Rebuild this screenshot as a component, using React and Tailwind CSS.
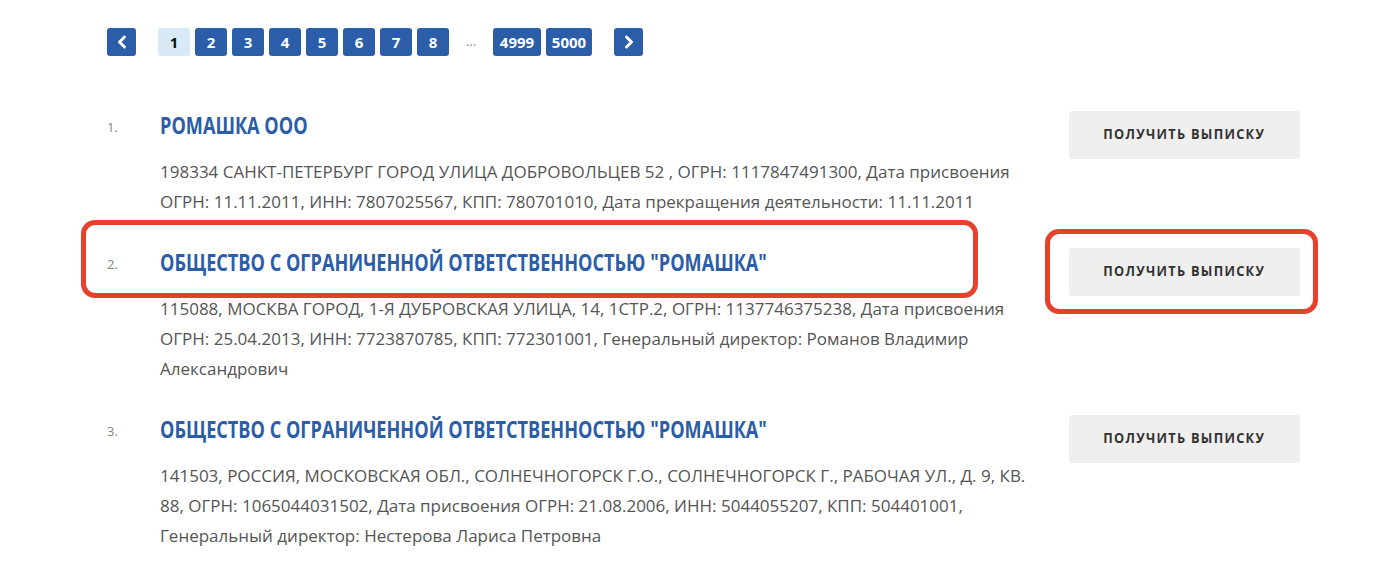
import React from "react";
import { ChevronLeft, ChevronRight } from "lucide-react";

const pages = ["1", "2", "3", "4", "5", "6", "7", "8"];

const items = [
  {
    n: "1.",
    title: "РОМАШКА ООО",
    text: "198334 САНКТ-ПЕТЕРБУРГ ГОРОД УЛИЦА ДОБРОВОЛЬЦЕВ 52 , ОГРН: 1117847491300, Дата присвоения ОГРН: 11.11.2011, ИНН: 7807025567, КПП: 780701010, Дата прекращения деятельности: 11.11.2011",
  },
  {
    n: "2.",
    title: 'ОБЩЕСТВО С ОГРАНИЧЕННОЙ ОТВЕТСТВЕННОСТЬЮ "РОМАШКА"',
    text: "115088, МОСКВА ГОРОД, 1-Я ДУБРОВСКАЯ УЛИЦА, 14, 1СТР.2, ОГРН: 1137746375238, Дата присвоения ОГРН: 25.04.2013, ИНН: 7723870785, КПП: 772301001, Генеральный директор: Романов Владимир Александрович",
  },
  {
    n: "3.",
    title: 'ОБЩЕСТВО С ОГРАНИЧЕННОЙ ОТВЕТСТВЕННОСТЬЮ "РОМАШКА"',
    text: "141503, РОССИЯ, МОСКОВСКАЯ ОБЛ., СОЛНЕЧНОГОРСК Г.О., СОЛНЕЧНОГОРСК Г., РАБОЧАЯ УЛ., Д. 9, КВ. 88, ОГРН: 1065044031502, Дата присвоения ОГРН: 21.08.2006, ИНН: 5044055207, КПП: 504401001, Генеральный директор: Нестерова Лариса Петровна",
  },
];

const PageBtn = ({ children, active, w = "w-8" }) => (
  <span
    className={
      "h-7 flex items-center justify-center rounded-[3px] text-[15px] font-bold " +
      w +
      (active ? " bg-[#d8eaf6] text-[#111]" : " bg-[#2b5da8] text-white")
    }
  >
    {children}
  </span>
);

export default function App() {
  return (
    <div
      className="relative w-[1400px] h-[579px] bg-white overflow-hidden"
      style={{ fontFamily: '"Open Sans", sans-serif' }}
    >
      <div className="pl-[107px] pt-[28px]">
        <div className="flex items-center h-7">
          <span className="w-[29px] h-7 flex items-center justify-center rounded-[3px] bg-[#2b5da8] text-white">
            <ChevronLeft size={20} strokeWidth={3.6} />
          </span>
          <div className="flex gap-[5px] ml-[22px]">
            {pages.map((p) => (
              <PageBtn key={p} active={p === "1"}>
                {p}
              </PageBtn>
            ))}
          </div>
          <span className="w-[44px] text-center text-[13px] text-[#888]">...</span>
          <div className="flex gap-[5px]">
            <PageBtn w="w-[48px]">4999</PageBtn>
            <PageBtn w="w-[46px]">5000</PageBtn>
          </div>
          <span className="ml-[22px] w-[29px] h-7 flex items-center justify-center rounded-[3px] bg-[#2b5da8] text-white">
            <ChevronRight size={20} strokeWidth={3.6} />
          </span>
        </div>

        <div className="mt-[55px] flex flex-col gap-[31px]">
          {items.map((it) => (
            <div key={it.n} className="flex">
              <div className="w-[53px] text-[13px] text-[#888] leading-[30px] pt-[1px]">{it.n}</div>
              <div className="w-[872px]">
                <div className="h-[30px] leading-[28px] whitespace-nowrap">
                  <span className="inline-block origin-left scale-x-[0.755] text-[24px] font-bold text-[#2b5da8]">
                    {it.title}
                  </span>
                </div>
                <p className="mt-[16px] text-[17px] leading-[30px] text-[#555]">{it.text}</p>
              </div>
              <div className="ml-[37px]">
                <button className="w-[231px] h-12 pb-[4px] rounded-[3px] bg-[#efefef] flex items-center justify-center">
                  <span className="inline-block scale-x-[0.85] text-[15px] font-bold tracking-[1.5px] text-[#333] whitespace-nowrap">
                    ПОЛУЧИТЬ ВЫПИСКУ
                  </span>
                </button>
              </div>
            </div>
          ))}
        </div>
      </div>

      <div className="absolute left-[81px] top-[220px] w-[897px] h-[78px] border-[5px] border-[#e5412c] rounded-[14px]" />
      <div className="absolute left-[1045px] top-[229px] w-[273px] h-[85px] border-[5px] border-[#e5412c] rounded-[14px]" />
    </div>
  );
}
